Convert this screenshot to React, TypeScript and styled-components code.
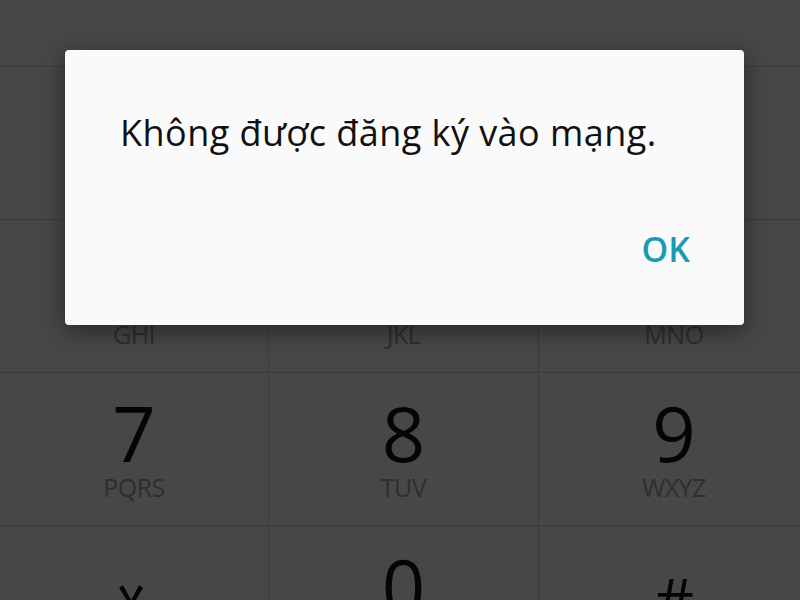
import styled, { createGlobalStyle } from 'styled-components';

const Global = createGlobalStyle`
  html, body {
    margin: 0;
    padding: 0;
    background: #474747;
  }
  * {
    box-sizing: border-box;
  }
`;

const Screen = styled.div`
  position: relative;
  width: 800px;
  height: 600px;
  overflow: hidden;
  background: #474747;
  font-family: 'Open Sans', 'Noto Sans', sans-serif;
`;

const Keypad = styled.div`
  display: grid;
  width: 809px;
  grid-template-columns: 269px 270px 270px;
  grid-template-rows: 67px repeat(4, 153px);
`;

const DisplayArea = styled.div`
  grid-column: 1 / span 3;
  border-bottom: 1px solid #3b3b3b;
`;

const Key = styled.div<{ $last?: boolean }>`
  display: flex;
  flex-direction: column;
  align-items: center;
  padding-top: 22px;
  border-bottom: 1px solid #3b3b3b;
  border-right: ${(p) => (p.$last ? 'none' : '1px solid #3b3b3b')};
`;

const Digit = styled.div`
  height: 76px;
  font-size: 76px;
  line-height: 76px;
  color: #050505;
  font-weight: 400;
`;

const Hash = styled(Digit)`
  font-size: 62px;
  padding-top: 14px;
`;

// the dialer star has its arms turned sideways
const Star = styled.div`
  font-family: 'DejaVu Sans', sans-serif;
  font-size: 84px;
  line-height: 84px;
  height: 84px;
  margin-top: 31px;
  color: #050505;
  transform-origin: 50% 29.6%;
  transform: rotate(90deg);
`;

const Letters = styled.div`
  margin-top: 1px;
  font-size: 25px;
  line-height: 30px;
  color: #2e2e2e;
  letter-spacing: -0.5px;
`;

const Dialog = styled.div`
  position: absolute;
  left: 65px;
  top: 50px;
  width: 679px;
  height: 275px;
  border-radius: 4px;
  background: #fafafa;
  box-shadow: 0 6px 24px rgba(0, 0, 0, 0.45);
  display: flex;
  flex-direction: column;
  padding: 58px 54px 0 55px;
`;

const Message = styled.div`
  font-size: 36px;
  line-height: 50px;
  color: #111;
  letter-spacing: 0.45px;
`;

const Actions = styled.div`
  display: flex;
  justify-content: flex-end;
  margin-top: 71px;
`;

const OkButton = styled.button`
  border: none;
  background: none;
  padding: 0;
  font-family: inherit;
  font-size: 34px;
  line-height: 40px;
  font-weight: 600;
  color: #1b9ab3;
`;

const keys = [
  ['1', ''],
  ['2', 'ABC'],
  ['3', 'DEF'],
  ['4', 'GHI'],
  ['5', 'JKL'],
  ['6', 'MNO'],
  ['7', 'PQRS'],
  ['8', 'TUV'],
  ['9', 'WXYZ'],
  ['*', ''],
  ['0', '+'],
  ['#', ''],
];

function Glyph({ d }: { d: string }) {
  if (d === '*') return <Star>*</Star>;
  if (d === '#') return <Hash>#</Hash>;
  return <Digit>{d}</Digit>;
}

export default function App() {
  return (
    <Screen>
      <Global />
      <Keypad>
        <DisplayArea />
        {keys.map(([d, l], i) => (
          <Key key={d} $last={i % 3 === 2}>
            <Glyph d={d} />
            {l && <Letters>{l}</Letters>}
          </Key>
        ))}
      </Keypad>
      <Dialog>
        <Message>Không được đăng ký vào mạng.</Message>
        <Actions>
          <OkButton>OK</OkButton>
        </Actions>
      </Dialog>
    </Screen>
  );
}
